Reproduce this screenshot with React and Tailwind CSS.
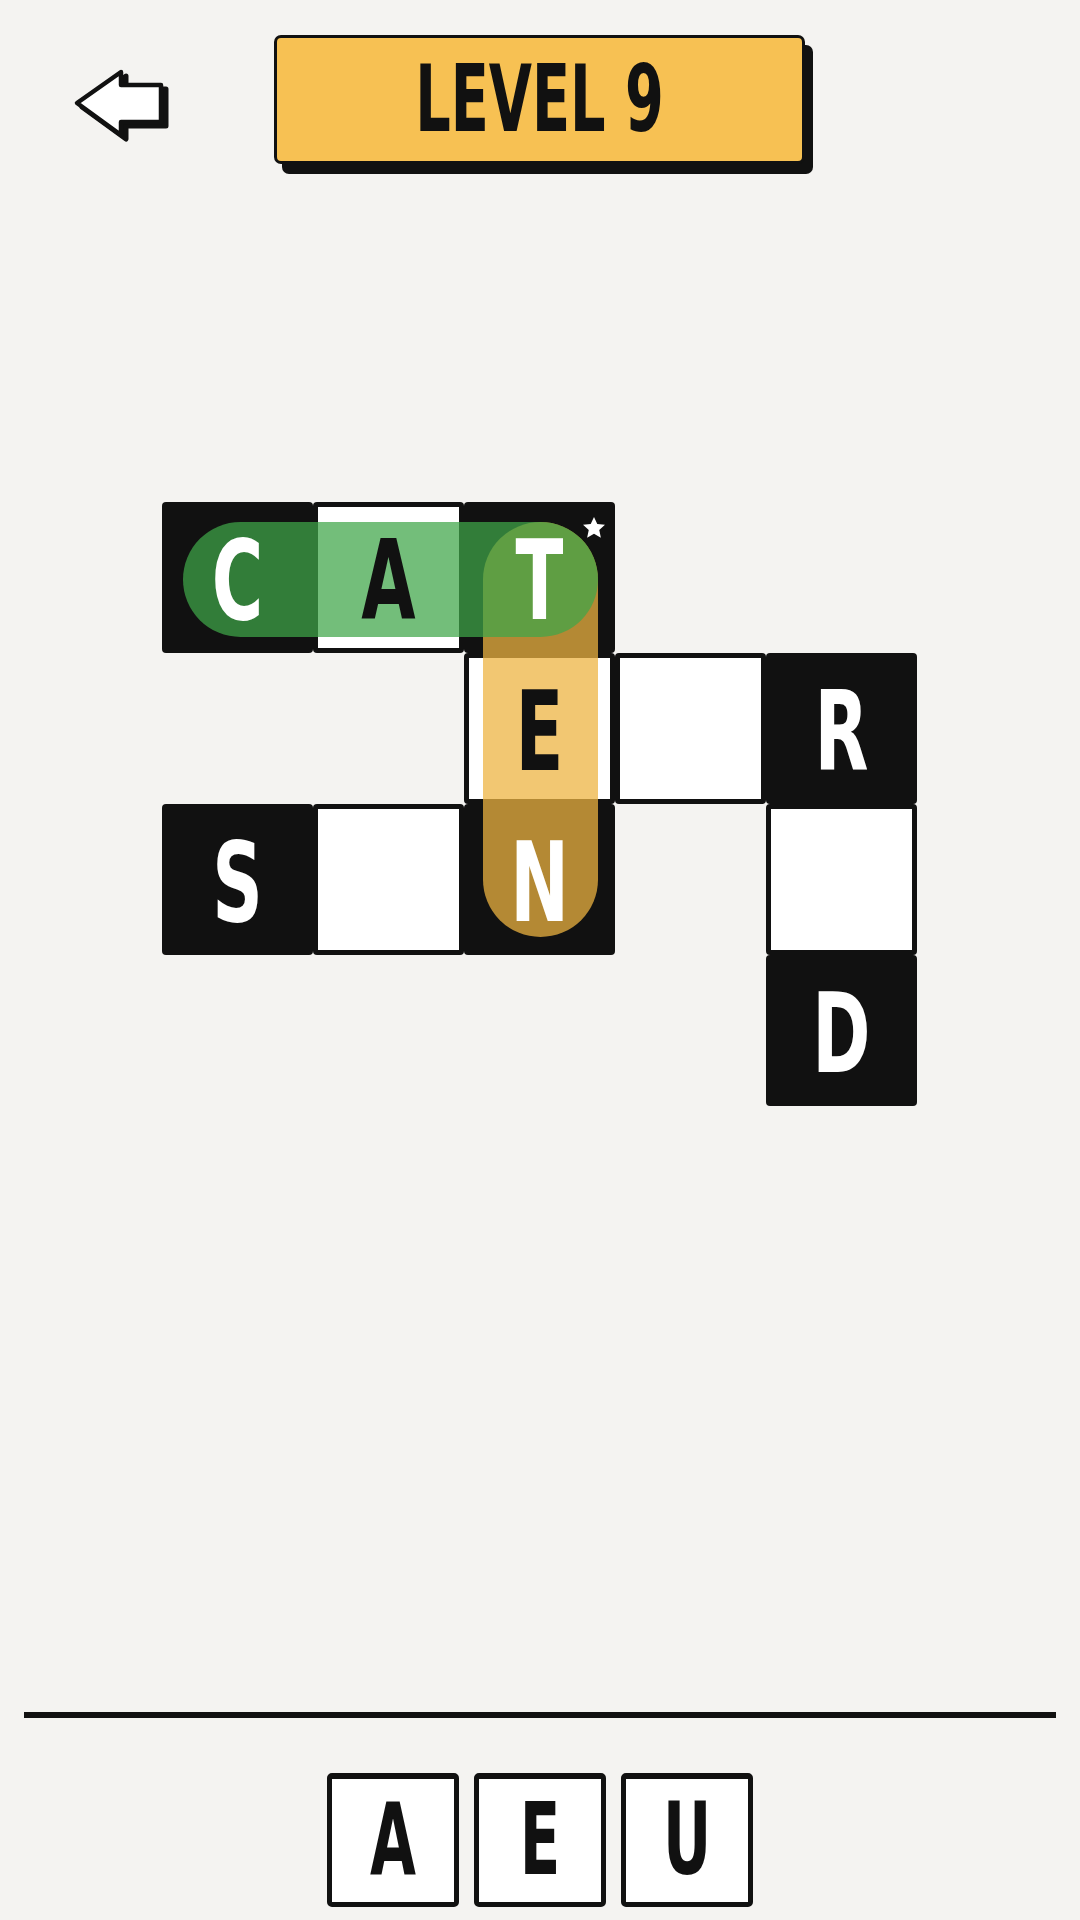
import React from 'react';

const FONT = { fontFamily: '"Liberation Sans Narrow", "DejaVu Sans Condensed", "Liberation Sans", sans-serif' };

// grid cells: [row, col, letter, dark]
const CELLS = [
  [0, 0, 'C', true],
  [0, 1, 'A', false],
  [0, 2, 'T', true],
  [1, 2, 'E', false],
  [1, 3, '', false],
  [1, 4, 'R', true],
  [2, 0, 'S', true],
  [2, 1, '', false],
  [2, 2, 'N', true],
  [2, 4, '', false],
  [3, 4, 'D', true],
];

const ROW = ['row-start-1', 'row-start-2', 'row-start-3', 'row-start-4'];
const COL = ['col-start-1', 'col-start-2', 'col-start-3', 'col-start-4', 'col-start-5'];

const ARROW = 'M48 5 L4 36 L48 68 L48 55 L88 55 L88 18 L48 18 Z';

function BackArrow() {
  return (
    <svg width="100" height="80" viewBox="0 0 100 80" className="block">
      <path d={ARROW} fill="#111" stroke="#111" strokeWidth="5" strokeLinejoin="round" transform="translate(5 4)" />
      <path d={ARROW} fill="#fff" stroke="#111" strokeWidth="4.5" strokeLinejoin="round" />
    </svg>
  );
}

function Star() {
  return (
    <svg width="28" height="28" viewBox="0 0 24 24" className="block">
      <path d="M12 2.5l2.8 6.1 6.6.7-4.9 4.5 1.4 6.5L12 17l-5.9 3.3 1.4-6.5L2.6 9.3l6.6-.7z" fill="#fff" />
    </svg>
  );
}

function CellBox({ row, col, dark }) {
  return (
    <div className={`${ROW[row]} ${COL[col]} bg-[#111111] rounded-[4px] flex`}>
      {!dark && <div className="flex-1 bg-white m-[5px]" />}
    </div>
  );
}

function CellLetter({ row, col, letter, dark }) {
  return (
    <div className={`${ROW[row]} ${COL[col]} flex items-center justify-center pt-[6px]`}>
      <span
        className={`font-bold text-[78px] leading-none scale-y-[1.42] ${dark ? 'text-white' : 'text-[#111111]'}`}
        style={FONT}
      >
        {letter}
      </span>
    </div>
  );
}

export default function App() {
  return (
    <div className="w-[1080px] h-[1920px] bg-[#f4f3f1] flex flex-col overflow-hidden">
      <header className="h-[174px] flex items-start pt-[35px]">
        <div className="ml-[73px] mt-[32px] w-[201px]">
          <BackArrow />
        </div>
        <div className="relative">
          <div className="absolute left-[8px] top-[10px] w-[531px] h-[129px] bg-[#111111] rounded-[7px]" />
          <div className="relative w-[531px] h-[129px] bg-[#f7c153] border-[3px] border-[#111111] rounded-[7px] flex items-center justify-center">
            <span className="font-bold text-[62px] leading-none scale-y-[1.48] text-[#111111]" style={FONT}>
              LEVEL 9
            </span>
          </div>
        </div>
      </header>

      <main className="flex-1 pt-[328px] pl-[162px]">
        <div className="relative w-[755px] h-[604px]">
          <div className="grid grid-cols-[repeat(5,151px)] grid-rows-[repeat(4,151px)]">
            {CELLS.map(([r, c, l, d]) => (
              <CellBox key={`${r}-${c}`} row={r} col={c} dark={d} />
            ))}
          </div>
          {/* found-word highlights */}
          <div className="absolute left-[321px] top-[20px] w-[115px] h-[415px] rounded-full bg-[rgba(238,180,65,0.74)]" />
          <div className="absolute left-[21px] top-[20px] w-[415px] h-[115px] rounded-full bg-[rgba(63,166,72,0.73)]" />
          <div className="absolute inset-0 grid grid-cols-[repeat(5,151px)] grid-rows-[repeat(4,151px)]">
            {CELLS.map(([r, c, l, d]) => (
              <CellLetter key={`${r}-${c}`} row={r} col={c} letter={l} dark={d} />
            ))}
          </div>
          <div className="absolute left-[418px] top-[12px]">
            <Star />
          </div>
        </div>
      </main>

      <footer className="flex flex-col items-center pb-[13px]">
        <div className="w-[1032px] h-[6px] bg-[#111111]" />
        <div className="flex gap-[15px] mt-[55px]">
          {['A', 'E', 'U'].map((l) => (
            <div
              key={l}
              className="w-[132px] h-[134px] bg-white border-[5px] border-t-[6px] border-[#111111] rounded-[5px] flex items-center justify-center"
            >
              <span className="font-bold text-[66px] leading-none scale-y-[1.5] text-[#111111]" style={FONT}>
                {l}
              </span>
            </div>
          ))}
        </div>
      </footer>
    </div>
  );
}
